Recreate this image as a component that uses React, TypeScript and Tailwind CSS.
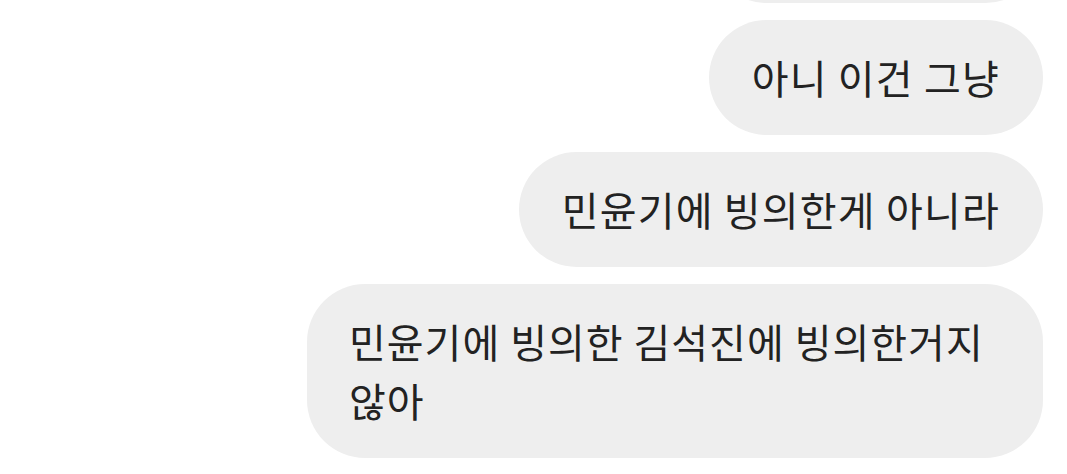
const messages = [
  '그럼 이건 뭔데',
  '아니 이건 그냥',
  '민윤기에 빙의한게 아니라',
];

export default function App() {
  return (
    <main
      className="w-full h-[474px] overflow-hidden bg-white"
      style={{ fontFamily: '"Noto Sans CJK KR", "Noto Sans", sans-serif' }}
    >
      <div className="flex flex-col items-end gap-[17px] pr-[24px] mt-[-112px]">
        {messages.map((m) => (
          <div
            key={m}
            className="rounded-full bg-[#eeeeee] px-[43px] py-[28px] text-[40px] leading-[59px] tracking-[0.03em] text-[#222222] whitespace-nowrap"
          >
            {m}
          </div>
        ))}
        <div className="w-[736px] rounded-[58px] bg-[#eeeeee] px-[42px] py-[28px] text-[40px] leading-[59px] tracking-[0.025em] text-[#222222] whitespace-nowrap">
          민윤기에 빙의한 김석진에 빙의한거지
          <br />
          않아
        </div>
      </div>
    </main>
  );
}
